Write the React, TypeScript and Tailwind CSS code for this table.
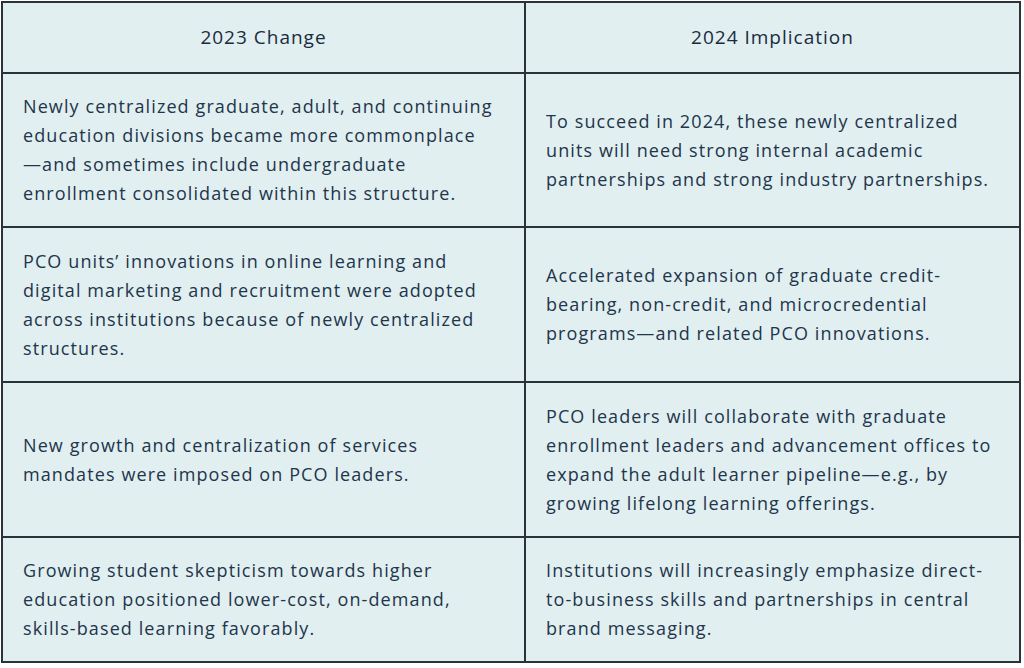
const rows = [
  {
    change:
      "Newly centralized graduate, adult, and continuing education divisions became more commonplace —\u2060and sometimes include undergraduate enrollment consolidated within this structure.",
    implication:
      "To succeed in 2024, these newly centralized units will need strong internal academic partnerships and strong industry partnerships.",
    h: "h-[154px]",
  },
  {
    change:
      "PCO units’ innovations in online learning and digital marketing and recruitment were adopted across institutions because of newly centralized structures.",
    implication:
      "Accelerated expansion of graduate credit-bearing, non-credit, and microcredential programs—and related PCO innovations.",
    h: "h-[155px]",
  },
  {
    change: "New growth and centralization of services mandates were imposed on PCO leaders.",
    implication:
      "PCO leaders will collaborate with graduate enrollment leaders and advancement offices to expand the adult learner pipeline—e.g., by growing lifelong learning offerings.",
    h: "h-[155px]",
  },
  {
    change:
      "Growing student skepticism towards higher education positioned lower-cost, on-demand, skills-based learning favorably.",
    implication:
      "Institutions will increasingly emphasize direct-to-business skills and partnerships in central brand messaging.",
    h: "h-[125px]",
  },
];

export default function App() {
  return (
    <div className="min-h-[668px] w-[1024px] bg-white pl-px pt-px font-['Open_Sans','Noto_Sans',sans-serif] text-[#22354b]">
      <table className="w-[1020px] table-fixed border-collapse bg-[#e1eff0]">
        <colgroup>
          <col className="w-[523px]" />
          <col />
        </colgroup>
        <thead>
          <tr className="h-[71px]">
            <th className="border-2 border-[#2a3438] text-center text-[19px] font-medium tracking-[1px] text-[#1a2b40]">2023 Change</th>
            <th className="border-2 border-[#2a3438] text-center text-[19px] font-medium tracking-[1px] text-[#1a2b40]">2024 Implication</th>
          </tr>
        </thead>
        <tbody>
          {rows.map((r) => (
            <tr key={r.change} className={r.h}>
              <td className="border-2 border-[#2a3438] px-5 align-middle text-[18px] leading-[29px] tracking-[1.1px]">{r.change}</td>
              <td className="border-2 border-[#2a3438] px-5 align-middle text-[18px] leading-[29px] tracking-[1.1px]">{r.implication}</td>
            </tr>
          ))}
        </tbody>
      </table>
    </div>
  );
}
